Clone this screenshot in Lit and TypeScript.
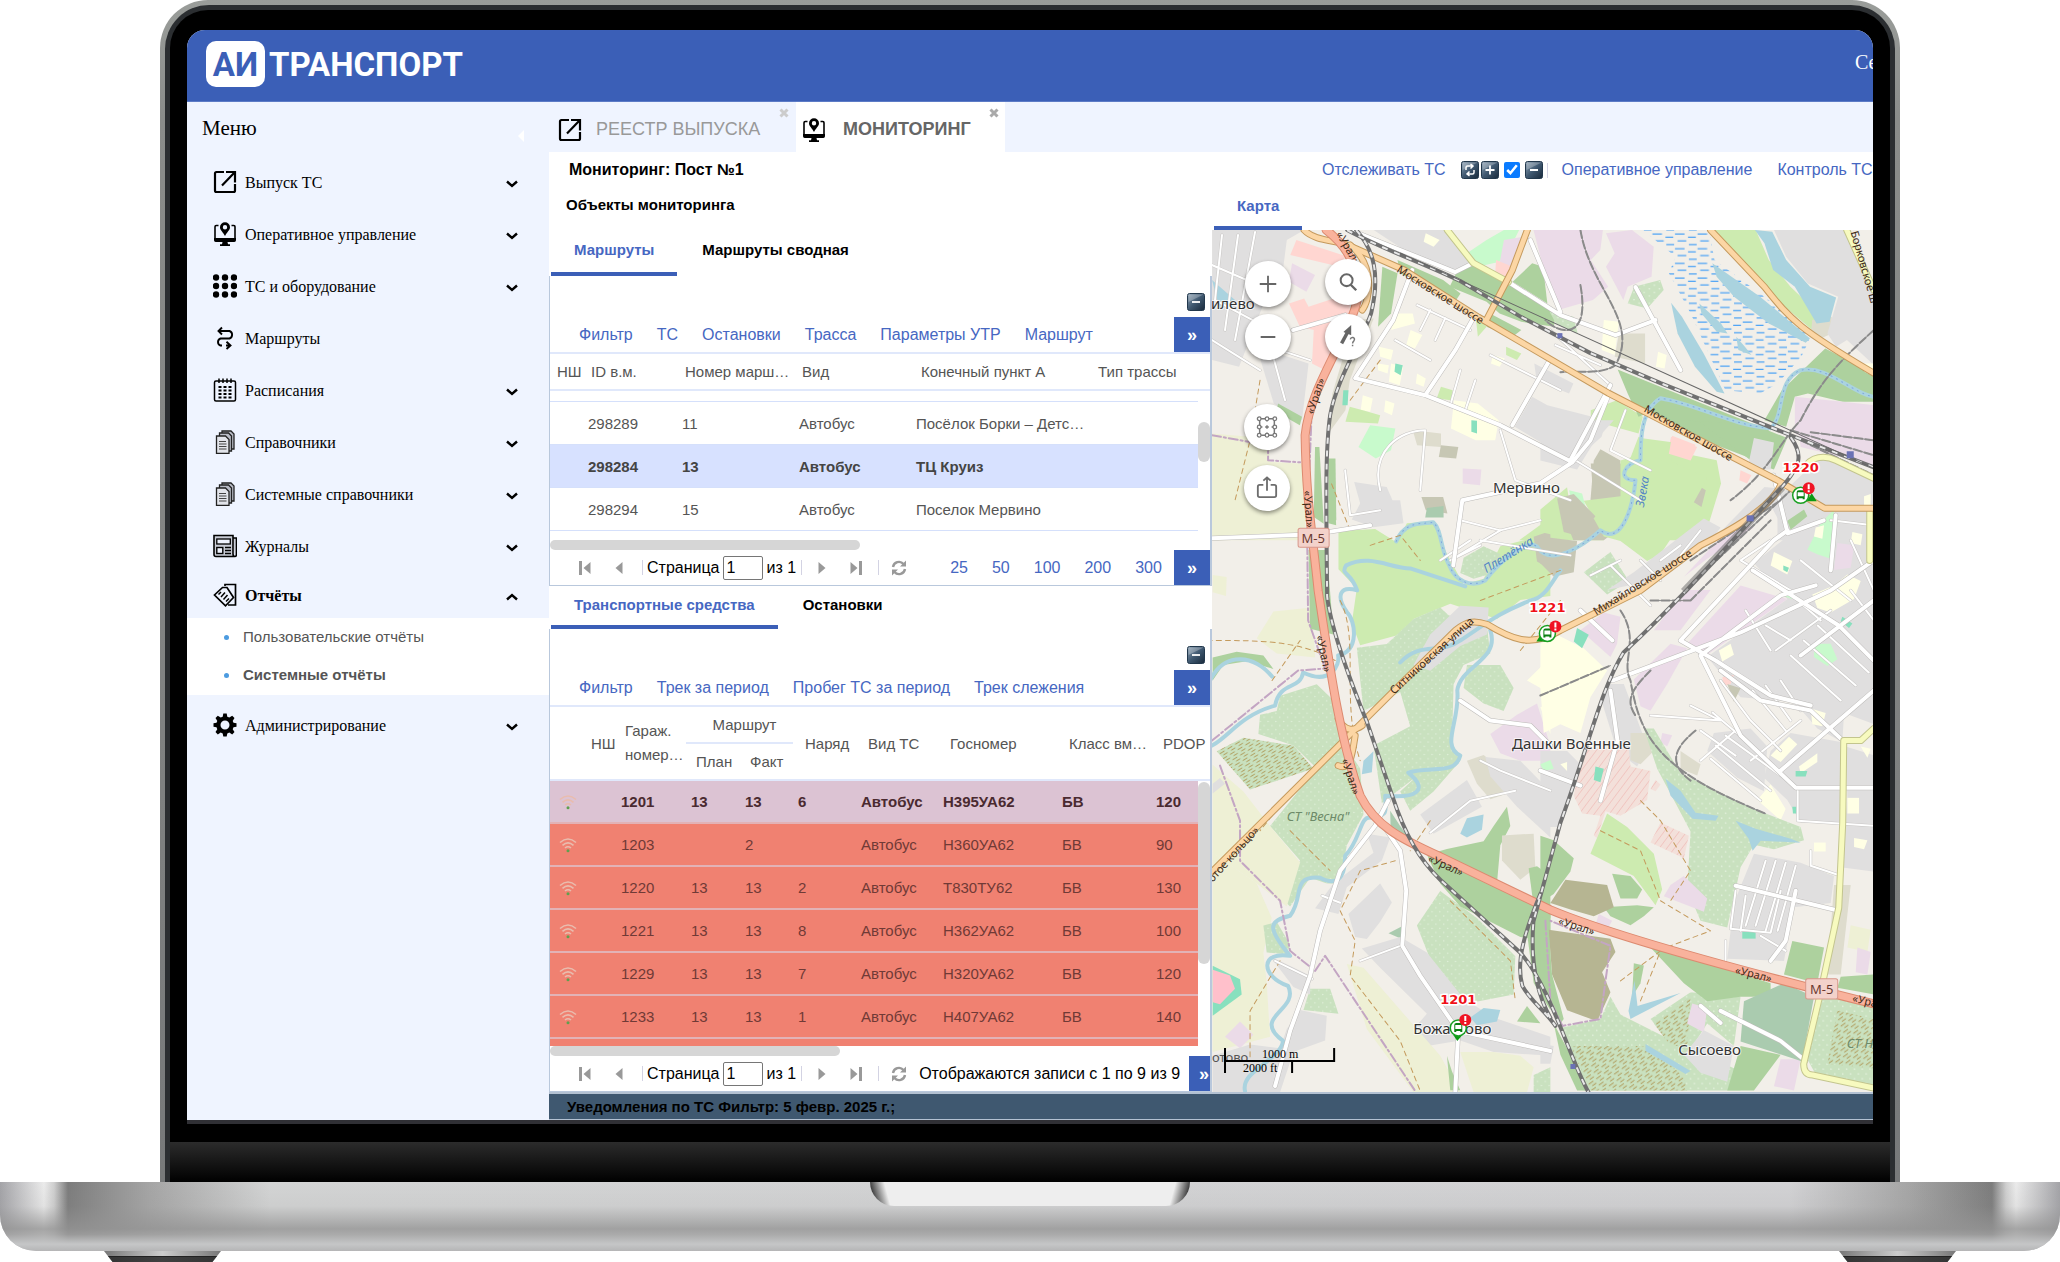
import { LitElement, html, svg, css, nothing } from "lit";
import { customElement } from "lit/decorators.js";

/* ---------- icons ---------- */
const openIcon = svg`<path d="M11 2H3.500Q2 2 2 3.500V20.500Q2 22 3.500 22H20.500Q22 22 22 20.500V14M22 12.500V2H13M21.500 2.500L9 15.500" fill="none" stroke="currentColor" stroke-width="2.200"/>`;
const monitorIcon = svg`<path d="M5.500 3.500H3.200Q2 3.500 2 4.700V16M22 16V4.700Q22 3.500 20.800 3.500H18.500" fill="none" stroke="currentColor" stroke-width="1.600"/><path d="M1 16H23V18.300Q23 20 21.300 20H2.700Q1 20 1 18.300ZM9.500 20H14.500L15 22.300H17V24H7V22.300H9Z" fill="currentColor"/><path fill-rule="evenodd" d="M12 0.200A5 5 0 0 1 17 5.200C17 8.300 13.300 10.800 12 14C10.700 10.800 7 8.300 7 5.200A5 5 0 0 1 12 0.200ZM12 3A2.200 2.200 0 1 0 12 7.400A2.200 2.200 0 1 0 12 3Z" fill="currentColor"/>`;
const dotsIcon = svg`${[3.500, 12, 20.500].map((y) => [3, 12, 21].map((x) => svg`<circle cx=${x} cy=${y} r="3.200" fill="currentColor"/>`))}`;
const routeIcon = svg`<path d="M9 1.500L5.500 5L9 8.500M6 5H16.500A4 4 0 0 1 16.500 12.500H7.500A3.700 3.700 0 0 0 7.500 19.500H9M13 19.500H17M13.500 15.800L17.500 19.500L13.500 23" fill="none" stroke="currentColor" stroke-width="1.900"/>`;
const calendarIcon = svg`<rect x="1.500" y="3" width="21" height="20" rx="1.500" fill="none" stroke="currentColor" stroke-width="1.500"/><path d="M6 0.500V5M10 0.500V5M14 0.500V5M18 0.500V5" stroke="currentColor" stroke-width="1.500"/>${[9, 12.500, 16, 19.500].map((y) => svg`<path d="M5.500 ${y}H8.500M10.500 ${y}H13.500M15.500 ${y}H18.500" stroke="currentColor" stroke-width="1.900"/>`)}`;
const docsIcon = svg`<g stroke="#222" stroke-width="1.300" fill="#b9bcc6"><path d="M9 1H18L21 4V19H9Z"/><path d="M6.500 3H15.500L18.500 6V21H6.500Z"/><path d="M3.500 6H12.500L16 9.500V23.300H3.500Z" fill="#e2e4ea"/></g><path d="M6 11.500H13M6 14H13.500M6 16.500H13.500M6 19H13.500" stroke="#444" stroke-width="1.200"/>`;
const newsIcon = svg`<path d="M1 1.500H20V20Q20 22.500 22 22.500H3Q1 22.500 1 20.500ZM20 4H23.500V20.500Q23.500 22.500 21.800 22.500" fill="#c9ccd6" stroke="currentColor" stroke-width="1.600"/><rect x="3.800" y="5" width="13.500" height="5" fill="#eef2fd" stroke="currentColor" stroke-width="1.300"/><rect x="3.800" y="13.500" width="6" height="6" fill="#eef2fd" stroke="currentColor" stroke-width="1.400"/><path d="M12 13.500H18M12 16.500H18M12 19.500H18" stroke="currentColor" stroke-width="1.400"/>`;
const reportIcon = svg`<path d="M12 3V1.500H22.500V22H15" fill="none" stroke="currentColor" stroke-width="1.700"/><path d="M9.500 4.500H14L20.500 14.500L12.500 22.800L1.500 12Z" fill="#eff4ff" stroke="currentColor" stroke-width="1.700"/><path d="M5.500 11.500L8 9M8 14L12 9.500M10.500 16.500L14.500 12M13 18.500L16 15.500" stroke="currentColor" stroke-width="1.500"/>`;
const gearIcon = svg`<path fill="currentColor" fill-rule="evenodd" d="M10.300 0.500H13.700L14.300 3.700L16.300 4.500L19.200 2.700L21.500 5.100L19.700 7.900L20.500 9.800L23.500 10.300V13.700L20.500 14.300L19.700 16.200L21.500 19L19.200 21.400L16.300 19.600L14.300 20.400L13.700 23.500H10.300L9.700 20.400L7.700 19.600L4.800 21.400L2.500 19L4.300 16.200L3.500 14.300L0.500 13.700V10.300L3.500 9.800L4.300 7.900L2.500 5.100L4.800 2.700L7.700 4.500L9.700 3.700ZM12 7.500A4.500 4.500 0 1 0 12 16.500A4.500 4.500 0 1 0 12 7.500Z"/>`;
const icon = (body: unknown, cls = "ico") => html`<svg class=${cls} viewBox="0 0 24 24" aria-hidden="true">${body}</svg>`;
const chevron = (up: boolean) => html`<svg class="chev" viewBox="0 0 12 8" aria-hidden="true"><path d=${up ? "M1 6.500L6 2L11 6.500" : "M1 1.500L6 6L11 1.500"} fill="none" stroke="#000" stroke-width="2.400"/></svg>`;
const wifi = html`<svg class="wifi" viewBox="0 0 18 16" aria-hidden="true"><path d="M1 5.500Q9 -1.500 17 5.500M3.500 8.300Q9 3.300 14.500 8.300M6 11Q9 8.500 12 11" fill="none" stroke="#e9bcae" stroke-width="1.600"/><circle cx="9" cy="13.800" r="1.500" fill="#5fa04e"/></svg>`;

const tile = (sign: unknown) => html`<svg viewBox="0 0 18 18" aria-hidden="true">
  <defs><linearGradient id="t" x1="0" y1="0" x2="1" y2="1"><stop offset="0" stop-color="#8fa3b5"/><stop offset="0.500" stop-color="#3f5870"/><stop offset="1" stop-color="#18293a"/></linearGradient></defs>
  <rect x="0.500" y="0.500" width="17" height="17" rx="2" fill="url(#t)" stroke="#22384c"/>
  <path d="M1.500 1.500H16.500L1.500 9Z" fill="#fff" opacity="0.250"/>${sign}</svg>`;
const minus = svg`<path d="M5 9H13" stroke="#fff" stroke-width="1.800"/>`;
const plus = svg`<path d="M4.500 9H13.500M9 4.500V13.500" stroke="#fff" stroke-width="1.800"/>`;
const swap = svg`<path d="M5 9V6.500Q5 5 6.500 5H11M9.500 3L12 5L9.500 7.500M13 9V11.500Q13 13 11.500 13H7M8.500 10.500L6 13L8.500 15" fill="none" stroke="#fff" stroke-width="1.500"/>`;

/* ---------- data ---------- */
const menu = [
  ["Выпуск ТС", openIcon, true],
  ["Оперативное управление", monitorIcon, true],
  ["ТС и оборудование", dotsIcon, true],
  ["Маршруты", routeIcon, false],
  ["Расписания", calendarIcon, true],
  ["Справочники", docsIcon, true],
  ["Системные справочники", docsIcon, true],
  ["Журналы", newsIcon, true],
] as const;

const routes = [
  ["298289", "11", "Автобус", "Посёлок Борки – Детс…", ""],
  ["298284", "13", "Автобус", "ТЦ Круиз", ""],
  ["298294", "15", "Автобус", "Поселок Мервино", ""],
];

const vehicles = [
  ["1201", "13", "13", "6", "Автобус", "Н395УА62", "БВ", "120"],
  ["1203", "", "2", "", "Автобус", "Н360УА62", "БВ", "90"],
  ["1220", "13", "13", "2", "Автобус", "Т830ТУ62", "БВ", "130"],
  ["1221", "13", "13", "8", "Автобус", "Н362УА62", "БВ", "100"],
  ["1229", "13", "13", "7", "Автобус", "Н320УА62", "БВ", "120"],
  ["1233", "13", "13", "1", "Автобус", "Н407УА62", "БВ", "140"],
];

/* ---------- map ---------- */
type Area = [string, string];
const C = {
  res: "#e0dfdf", farm: "#eef0d5", shop: "#ffd6d1", ind: "#ebdbe8", wood: "#add19e", grass: "#cdebb0",
  park: "#c8facc", orch: "url(#orchard)", lots: "url(#lots)", water: "#aad3df", school: "#ffffe5",
  brown: "#c7c7b4", olive: "#b6b592", cem: "#aacbaf", mil: "url(#mil)", pitch: "#88e0be", scrub: "#dedccd",
};

const north: Area[] = [
  [C.farm, "28,1000 160,1015 160,1085 235,1090 245,1320 28,1320"],
  [C.res, "28,390 240,390 200,420 190,520 150,600 120,700 90,800 28,780"],
  [C.res, "130,740 250,790 235,960 170,910"],
  [C.shop, "222,420 335,468 322,500 208,465"], [C.shop, "205,610 240,595 250,620 320,590 345,605 345,650 285,808 258,790 262,690 230,680"],
  [C.ind, "212,490 265,525 245,575 205,545"], [C.scrub, "355,660 400,655 345,840 335,930 290,1010 305,880"],
  [C.wood, "420,500 455,520 440,640 410,680"], [C.wood, "180,910 235,950 230,975 175,935"], [C.wood, "265,1040 275,1040 285,1270 262,1250"], [C.wood, "296,1075 312,1075 314,1260 296,1260"],
  [C.res, "400,390 570,390 625,490 590,518 470,450"], [C.school, "520,400 552,420 538,440 515,425"],
  [C.park, "612,462 660,420 700,390 735,390 712,450 690,485 640,500"],
  [C.ind, "700,420 745,410 735,450 720,510 690,490"], [C.shop, "682,480 720,500 705,540 680,520"],
  [C.wood, "625,490 705,545 820,630 815,680 740,665 690,640 660,605 575,560 590,520"], [C.wood, "765,490 790,500 800,610 720,545"], [C.wood, "455,480 560,540 600,580 590,600 460,520"], [C.wood, "668,640 740,690 720,710 660,680"],
  [C.ind, "768,390 928,390 922,450 900,480 940,560 905,600 825,630 790,500"], [C.ind, "935,400 995,390 1045,440 1040,530 985,560 975,600 935,500 955,460"],
  [C.orch, "1000,560 1060,540 1068,570 1030,625 985,610"], [C.orch, "805,635 860,650 870,700 820,670"],
  [C.school, "450,640 490,640 495,670 440,690"], [C.school, "485,690 512,705 495,745 475,735"], [C.school, "412,740 445,750 440,780 415,770"], [C.school, "440,790 468,800 460,855 435,845"], [C.school, "410,790 435,795 432,820 410,810"], [C.school, "500,820 520,835 515,860 497,850"], [C.school, "375,885 398,895 392,935 370,930"], [C.school, "427,900 448,910 442,945 424,935"], [C.school, "585,900 640,910 688,960 680,1020 635,1020 578,985"], [C.school, "675,765 702,775 690,800 670,790"],
  [C.pitch, "450,790 467,795 462,825 448,815"], [C.pitch, "330,870 342,870 340,915 328,915"], [C.pitch, "625,960 638,962 638,1000 625,995"],
  [C.grass, "345,920 375,930 415,945 410,970 335,965"], [C.grass, "555,860 582,870 578,900 545,895"], [C.grass, "635,650 660,680 640,710"], [C.grass, "705,740 740,760 730,780 705,765"],
  [C.park, "392,975 450,985 440,1050 405,1075 365,1040"],
  [C.scrub, "490,990 555,1000 555,1040 500,1035"], [C.brown, "555,1035 595,1040 590,1075 550,1070"], [C.ind, "605,1105 648,1108 645,1155 605,1150"], [C.brown, "510,1190 560,1190 570,1240 520,1230"],
  [C.res, "770,790 860,850 850,880 775,840"], [C.res, "765,890 800,915 935,960 925,1010 860,1085 725,980"], [C.res, "355,1145 430,1160 460,1250 380,1260"],
  [C.scrub, "965,700 1025,700 1025,790 955,770"], [C.school, "930,660 965,665 955,765 925,750"], [C.school, "1055,755 1075,765 1070,805 1050,800"],
  [C.grass, "900,930 960,900 1020,950 1010,1000 900,960"], [C.grass, "1010,1010 1080,1050 1190,1080 1200,1150 1160,1320 1000,1320 960,1180"],
  [C.shop, "1085,1010 1145,1040 1130,1080 1078,1050"], [C.brown, "900,1090 985,1090 970,1190 930,1220 905,1170"], [C.grass, "820,1240 880,1240 930,1320 735,1320"], [C.brown, "820,1190 900,1250 960,1290 930,1320 860,1320"],
  [C.park, "850,1170 880,1180 890,1230 860,1235"], [C.brown, "1140,1150 1165,1170 1155,1220 1130,1200"],
  [C.wood, "962,808 1060,860 1310,990 1290,1085 1190,1035 1040,935 1010,950 985,880"], [C.wood, "1300,960 1340,870 1440,745 1552,820 1552,905 1480,905 1400,880 1370,890 1350,980"],
  [C.grass, "1172,390 1280,390 1310,480 1360,560 1440,660 1410,690 1320,590"], [C.scrub, "1410,660 1455,650 1455,700 1430,715 1408,690"],
  ["url(#marsh)", "1020,390 1172,390 1185,480 1290,580 1410,700 1385,770 1330,850 1290,880 1210,870 1130,640 1080,520 1095,470"],
  [C.water, "1180,490 1290,590 1405,715 1395,728 1310,670 1230,590 1190,530"], [C.water, "1085,608 1110,650 1160,760 1208,880 1190,875 1140,800 1100,700"], [C.water, "1150,610 1200,670 1215,700 1190,695 1155,640"], [C.water, "1235,710 1255,740 1270,765 1240,750"],
  [C.water, "1278,390 1318,395 1350,480 1405,560 1465,592 1450,665 1420,670 1370,560 1320,510 1300,430"],
  [C.res, "1322,390 1490,390 1552,570 1552,795 1490,720 1465,740 1445,700 1470,590 1400,550 1350,470"],
  [C.ind, "1370,890 1480,905 1552,915 1552,1100 1370,1000"], [C.school, "1530,790 1552,790 1552,830 1530,815"],
  [C.res, "1300,1160 1335,1165 1280,1240 1240,1320 1180,1320"], [C.shop, "1245,1110 1270,1125 1260,1150 1242,1140"],
  [C.res, "1400,1110 1430,1075 1552,1130 1552,1320 1330,1320 1330,1200"], [C.school, "1370,1200 1420,1215 1400,1240 1370,1230"], [C.park, "1430,1250 1470,1260 1450,1320 1415,1310"], [C.ind, "1475,1265 1530,1280 1520,1320 1470,1320"], [C.shop, "1425,1150 1455,1160 1450,1200 1425,1190"],
];

const southwest: Area[] = [
  [C.farm, "38,0 320,0 322,40 300,95 38,105"], [C.farm, "220,290 335,280 345,410 230,400 170,360"], [C.farm, "38,195 80,200 78,250 38,240"],
  [C.res, "485,0 600,0 610,60 520,70 455,50"], [C.wood, "325,130 380,130 400,350 330,335"], [C.wood, "385,0 405,0 408,65 385,60"], [C.cem, "680,20 730,15 730,45 675,45"],
  [C.grass, "415,80 525,75 590,110 620,60 700,55 740,140 790,220 850,205 900,120 990,100 1050,40 1050,250 960,260 890,310 750,270 640,310 600,350 480,378 455,320 470,230 415,180"],
  [C.orch, "790,150 850,120 900,140 880,190 820,205 780,190"], [C.brown, "1000,95 1050,80 1050,180 1010,160"],
  [C.orch, "470,385 560,375 640,310 720,280 745,300 860,330 870,400 790,430 760,480 755,640 780,680 700,760 630,810 600,760 650,720 545,790 520,640 630,590 600,500 490,550"],
  [C.res, "690,350 780,275 865,280 860,350 780,380 690,445 640,430"], [C.orch, "800,430 900,430 940,490 910,550 850,530 790,490"],
  [C.orch, "240,510 350,480 410,530 420,620 480,700 490,820 440,900 420,1000 380,1000 330,985 270,1060 235,1030 300,940 210,850 350,700 280,640 175,610 180,560 230,550"],
  [C.lots, "50,655 130,620 280,640 340,700 150,755"], [C.wood, "38,410 110,395 190,405 220,440 140,420 70,430 38,470"],
  [C.farm, "38,690 130,760 210,850 300,945 260,1060 170,1000 38,920"], [C.farm, "38,920 170,1000 215,1090 190,1180 200,1260 210,1400 38,1440"],
  [C.res, "500,870 570,880 545,940 440,1010 415,1080 345,1065 400,1000 520,920"], [C.res, "540,1000 575,1050 540,1100 500,1145 465,1140 445,1080"], [C.cem, "565,1130 610,1110 605,1145"],
  [C.orch, "650,1110 720,1020 830,1090 945,1190 940,1290 820,1310 740,1270 700,1220"], [C.orch, "190,1110 230,1100 270,1160 260,1185 200,1180"],
  [C.wood, "680,925 740,910 850,890 880,850 920,800 930,850 900,900 890,1000 1050,1080 1050,1150 960,1140 780,1060 720,1000"], [C.scrub, "905,875 1000,870 1005,960 960,990 905,940"],
  [C.wood, "985,960 1010,955 1050,980 1050,1090 1000,1060"], [C.wood, "980,1130 1050,1080 1050,1330 1000,1260"],
  [C.res, "660,820 800,730 845,800 700,870"], [C.ind, "870,610 950,560 1010,530 1050,640 1050,680 960,680 900,660"], [C.scrub, "800,680 850,665 900,700 940,760 870,780 830,740"], [C.res, "855,670 960,680 1050,760 1050,880 950,800 870,720"],
  [C.school, "980,470 1050,410 1050,510 1020,490"], [C.school, "1020,540 1050,530 1050,610"],
  [C.water, "490,680 520,655 515,710 485,715"], [C.water, "800,830 850,820 845,860 800,880 780,870"], [C.cem, "570,810 600,850 625,880 572,880"],
  [C.res, "485,1170 600,1140 680,1180 790,1300 880,1350 1050,1400 1050,1450 880,1440 780,1410 640,1430 640,1380 680,1340 540,1220"], [C.farm, "440,1210 490,1220 560,1290 720,1450 780,1545 640,1545 500,1380"], [C.farm, "780,1440 880,1440 960,1450 1000,1480 980,1545 820,1545"],
  [C.pitch, "38,1215 120,1250 125,1290 38,1345"], ["#ffc0cb", "38,1225 90,1240 105,1275 60,1315 38,1310"], [C.ind, "75,1400 120,1360 160,1395 120,1430"],
  [C.res, "38,1450 150,1420 240,1430 260,1380 300,1330 380,1345 375,1410 280,1440 240,1545 38,1545"], [C.orch, "330,1275 390,1275 415,1340 310,1330"], [C.res, "210,1190 330,1240 330,1290 280,1270"],
  [C.water, "810,1350 850,1325 900,1330 890,1360 830,1370"], [C.wood, "950,1360 980,1320 1020,1365"], [C.wood, "740,1450 755,1490 780,1540 750,1540"], [C.orch, "1000,1500 1050,1480 1050,1545 1000,1545"], [C.res, "38,740 60,725 75,740 38,765"],
];

const southeast: Area[] = [
  [C.res, "0,0 220,0 160,50 110,110 0,90"], [C.brown, "180,65 240,90 235,150 200,190 150,180 160,90"], [C.grass, "240,90 330,70 500,130 440,210 360,300 320,315 240,270 190,260 130,180 240,170"],
  [C.grass, "0,200 80,150 100,250 60,260 0,250"], [C.brown, "50,175 100,165 165,215 120,260 70,250"], [C.brown, "0,260 110,270 100,340 40,350 0,320"], [C.orch, "130,340 210,295 265,360 200,390"],
  [C.grass, "300,40 400,50 390,100 340,80"], [C.shop, "395,35 465,55 450,90 385,75"], [C.res, "280,340 490,220 540,240 500,280 330,360 200,380"],
  [C.wood, "200,0 420,0 640,10 740,40 700,110 640,95 470,0"], [C.res, "640,40 700,50 690,110 620,110"], [C.ind, "770,0 1000,0 1000,100 780,60"],
  [C.res, "800,110 850,90 1000,150 1000,680 910,655 905,720 830,690 760,630 600,620 500,530 740,400 640,320 740,260 690,190 730,160"],
  [C.park, "800,290 840,230 880,200 870,310 830,300"], [C.school, "825,240 850,235 845,265 820,260"], [C.school, "700,295 755,315 740,345 690,325"], [C.school, "815,390 880,370 920,345 960,360 940,400 870,430 830,420"], [C.school, "970,170 990,165 990,190 970,190"], [C.school, "935,250 965,255 960,280 930,275"],
  [C.park, "820,500 870,500 890,535 860,550 820,530"], [C.pitch, "905,440 935,455 925,465 900,450"], [C.park, "740,380 760,380 755,400 735,395"], [C.ind, "890,275 940,280 930,330 880,335"], [C.wood, "740,225 790,200 800,215 750,245"], [C.pitch, "728,325 745,330 740,340 728,335"],
  [C.ind, "440,500 600,370 740,400 500,525"], [C.ind, "340,470 430,380 510,380 420,470"], [C.ind, "120,470 190,430 240,440 230,500 210,530"], [C.ind, "280,580 390,500 440,510 380,590 330,650 300,640"], [C.ind, "530,270 600,230 640,240 500,310 430,350"],
  [C.school, "0,500 50,480 130,510 200,560 150,620 120,700 60,680 10,700 0,600"], [C.pitch, "110,465 145,480 125,510 100,495"], [C.school, "535,515 570,500 580,525 545,540"], [C.shop, "545,575 580,570 570,590 550,595"], [C.brown, "560,590 600,600 580,630"],
  [C.res, "210,590 250,590 300,690 320,730 290,775 230,740 180,620"], [C.res, "0,740 80,740 120,770 60,910 0,910"], [C.park, "0,770 30,760 40,780 10,785"], [C.school, "60,770 80,765 80,785"],
  [C.res, "520,700 630,690 680,730 670,830 590,800 500,740"], [C.res, "690,740 750,700 900,720 900,900 780,900 740,850 670,800"], [C.res, "915,730 1000,750 1000,1010 900,1000 920,850"], [C.school, "690,750 745,708 770,725 720,765"], [C.school, "810,645 855,655 845,685 815,680"], [C.school, "775,775 830,745 830,765 780,790"], [C.pitch, "765,785 800,785 795,797 765,797"], [C.school, "650,850 690,815 735,870 720,895"], [C.pitch, "755,865 770,865 770,880 757,880"], [C.school, "920,845 955,845 955,880 920,880"], [C.school, "820,945 855,945 855,965 820,965"], [C.school, "940,935 980,940 970,960 940,955"], [C.school, "800,1005 870,1015 850,1040 830,1065 800,1055"], [C.school, "960,730 990,735 980,755"], [C.ind, "365,700 395,705 380,730 360,720"],
  [C.mil, "130,735 265,735 270,775 330,785 320,850 240,885 195,875 170,935 160,930 180,885 125,880 100,840"], [C.pitch, "165,775 190,780 180,810 160,805"], [C.mil, "360,900 445,930 430,980 330,945"], [C.mil, "345,805 360,815 345,830 330,825"], [C.scrub, "270,700 330,700 340,740 300,770 270,760"], [C.scrub, "420,740 480,770 470,795 420,780"],
  [C.grass, "200,880 260,910 340,970 365,1050 345,1085 280,1020 150,970"],
  [C.orch, "310,690 340,690 420,790 640,870 780,910 790,940 700,960 640,950 600,1000 560,1135 480,1120 440,1050 450,920 400,850 350,780"],
  [C.ind, "430,1020 500,1070 490,1100 370,1065 390,1040"], [C.wood, "0,930 40,940 100,980 90,1010 40,1060 0,1080"], [C.wood, "215,1015 270,1020 305,1050 290,1070 240,1070"], [C.wood, "190,1090 290,1085 340,1090 310,1110 270,1130 210,1110"],
  [C.olive, "75,1028 200,1040 220,1090 160,1110 90,1095 30,1080"], [C.ind, "175,1105 215,1120 200,1140 165,1130"], [C.olive, "25,1140 210,1160 225,1190 185,1235 210,1280 170,1345 80,1320 35,1240"],
  [C.wood, "0,1110 22,1120 35,1240 70,1340 60,1350 0,1260"], [C.orch, "60,1360 180,1340 210,1290 240,1330 400,1390 580,1450 600,1500 130,1500"], [C.lots, "90,1400 330,1400 430,1470 440,1500 150,1500"],
  [C.orch, "330,1340 450,1280 600,1290 580,1400 500,1350 430,1430"], [C.lots, "340,1350 450,1290 440,1400 390,1400"], [C.wood, "280,1215 310,1220 300,1260 275,1290"], [C.wood, "330,1180 500,1215 690,1260 690,1290 600,1290 500,1300 430,1260"],
  [C.ind, "455,1305 500,1315 490,1370 440,1350"], [C.res, "430,1420 490,1365 580,1400 560,1480 480,1460"], [C.wood, "600,1400 720,1420 640,1500 560,1500"], [C.ind, "720,1430 780,1430 760,1500 700,1490"],
  [C.cem, "610,1300 730,1260 820,1290 785,1435 600,1390"], [C.wood, "755,1165 850,1180 830,1260 730,1240"], [C.orch, "850,1280 1000,1310 1000,1490 830,1470 800,1430"], [C.lots, "890,1320 1000,1340 1000,1450 860,1440"], [C.wood, "900,1245 1000,1240 1000,1285 890,1270"],
  [C.res, "640,970 780,990 880,1020 870,1080 760,1090 730,1210 560,1205 580,1080"], [C.pitch, "605,1145 645,1145 645,1160 605,1160"], [C.scrub, "880,1040 930,1040 900,1240 860,1240"], [C.farm, "930,1130 990,1140 980,1190 920,1180"], [C.ind, "950,1180 990,1190 980,1240 945,1235"],
  [C.res, "0,1395 40,1400 30,1440 0,1440"], [C.wood, "40,1350 90,1420 145,1500 110,1500 60,1420"],
];

const water = [
  "M1400 662C1420 640 1440 655 1460 640C1490 620 1500 612 1530 600C1545 598 1552 580 1560 570",
  "M1396 541C1405 520 1422 524 1433 522C1442 530 1440 550 1449 565C1455 580 1470 588 1485 580C1500 560 1530 535 1538 548C1550 565 1580 548 1600 530C1620 545 1632 510 1635 480C1615 480 1625 462 1640 460C1640 440 1640 410 1660 398C1700 405 1730 425 1770 428C1785 415 1775 380 1800 370C1830 365 1850 395 1880 398",
  "M1212 745C1230 735 1240 715 1275 705C1280 680 1300 690 1303 672C1330 685 1340 665 1338 655C1360 650 1355 620 1347 612C1335 595 1340 585 1357 590C1350 570 1340 575 1346 565C1370 553 1390 568 1410 568L1465 586",
  "M1210 680C1225 650 1255 655 1272 676", "M1490 630C1500 660 1460 665 1457 690C1460 720 1440 745 1460 755C1455 775 1430 765 1408 772C1430 790 1415 798 1385 795C1385 810 1390 815 1370 817C1360 815 1360 840 1345 855C1345 880 1335 885 1320 877C1290 875 1305 895 1290 915C1270 920 1265 925 1290 955C1260 950 1260 975 1288 985C1300 1010 1250 1015 1283 1040C1280 1060 1240 1070 1245 1090",
];
const rail = [
  "M1347 230C1380 248 1420 262 1460 281L1521 317L1590 353L1660 383L1720 407L1790 435L1873 467",
  "M1356 230C1374 250 1380 275 1371 313C1362 340 1336 380 1330 415C1325 450 1326 500 1327 596C1331 630 1350 680 1367 722L1392 795C1405 835 1420 860 1440 879L1520 952C1550 985 1570 1060 1588 1091",
  "M1790 437C1803 455 1800 465 1781 487C1740 530 1690 590 1623 652C1600 690 1590 740 1560 822L1533 921C1530 960 1535 990 1550 1017",
  "M1540 893C1525 930 1515 960 1522 985C1530 1000 1545 1010 1555 1025",
];
const sidings = [
  "M1580 285C1590 340 1560 335 1545 320M1580 230C1590 290 1640 320 1615 365C1600 375 1580 370 1560 372M1873 330C1840 360 1820 380 1800 420C1780 440 1770 470 1730 500", "M1700 575L1790 490M1690 560L1780 500M1690 600L1770 520M1650 600L1690 600M1790 430L1873 455M1800 440L1873 475M1810 432L1873 440M1620 610C1640 640 1620 660 1630 680C1640 740 1660 770 1765 813M1650 670C1630 690 1625 700 1635 715M1695 730C1670 750 1670 765 1690 780M1540 695L1610 665",
];
const trunk = "M1326 230C1352 250 1360 275 1357 300C1350 335 1310 385 1305 435C1306 500 1312 530 1318 590C1330 670 1340 740 1360 795C1375 825 1400 838 1440 856L1550 909C1600 930 1700 960 1873 1003";
const orange = [
  "M1304 230C1315 242 1340 240 1352 247L1404 270L1478 317L1608 393L1647 413L1777 480L1824 508H1873",
  "M1781 483C1770 510 1720 535 1700 545L1640 590L1560 630C1530 648 1510 638 1487 624C1475 620 1467 620 1455 630L1397 687L1212 871", "M1527 230L1512 270L1486 320", "M1710 230L1764 287C1790 320 1800 330 1873 373", "M1350 245C1375 265 1370 300 1362 310", "M1338 718C1345 732 1355 730 1362 725M1338 765C1350 770 1352 755 1355 735",
];
const yellow = ["M1447 230L1473 263L1508 282", "M1846 230L1873 290", "M1803 469C1810 455 1825 455 1835 460L1873 478", "M1873 728L1860 740H1843L1842 822L1838 907L1820 991L1803 1063Q1803 1074 1812 1074L1873 1087", "M1869 510V560"];
const white = [
  "M1412 270L1393 320L1355 378L1425 395L1500 425L1572 462L1590 440L1608 395M1425 395L1455 350L1472 320M1512 425L1548 362M1508 282L1560 315L1615 335L1655 320M1530 240L1560 312M1635 287L1680 370M1473 263L1455 272L1350 230M1572 462L1540 483L1462 500L1455 550L1453 565",
  "M1610 385L1570 460M1293 330L1345 315M1212 538L1313 534L1370 525M1580 610L1612 640M1612 680L1740 632L1830 590L1873 560M1680 640L1773 540L1787 530M1773 475L1787 533L1823 520M1835 515L1830 570M1700 655L1740 735L1795 787H1873M1680 640L1715 660L1770 695L1810 705M1815 585L1780 595L1700 655M1720 670L1760 700L1810 710L1840 738M1780 770L1873 690M1752 570L1838 625L1873 660M1800 655L1873 600M1460 700L1490 720L1530 725L1550 745M1540 770L1580 785M1735 885L1838 910M1770 960L1785 940L1795 890M1212 1090M1390 800",
  "M1388 800L1375 825L1340 870L1320 930L1310 975L1290 1030L1275 1085M1380 820L1400 850L1406 890L1402 945L1420 975L1458 1030L1550 1050M1458 1030L1455 1091M1720 1010L1780 1040L1805 1060M1700 1005L1720 1022M1610 690L1617 740L1600 800",
];
const fine = [
  "M1222 235L1215 300M1238 235L1225 330M1255 232L1235 340M1212 265L1270 290M1215 300L1262 325M1212 340L1260 370M1270 345L1285 400M1280 350L1310 360M1417 305L1470 330M1430 310L1420 330M1445 318L1435 340M1395 340L1430 360M1460 370L1450 405M1475 380L1465 410M1490 355L1560 390M1550 330L1610 385M1555 345L1600 365M1345 470L1350 515L1380 510M1380 490C1370 450 1400 430 1425 430L1420 490M1460 520L1500 530L1540 520M1500 430L1515 480L1570 500M1575 460L1640 500M1625 410L1610 450L1650 470M1480 540L1570 555",
  "M1735 755L1700 730M1745 740L1712 712M1750 760L1800 720M1752 690L1785 730M1765 685L1790 720M1780 680L1800 710M1790 655L1840 700M1803 640L1855 685M1817 625L1868 672M1775 650L1830 610M1745 610L1770 650M1765 625L1790 640M1780 585L1820 620M1850 540L1873 590M1850 590L1873 620M1800 560L1850 600M1770 540L1740 560L1790 590M1830 520L1873 525M1720 680L1750 720L1780 750M1715 745L1770 790M1725 735L1780 775M1710 758L1760 800M1797 790V820L1873 825M1810 850V865L1840 875M1735 730L1700 760M1690 705L1720 720L1650 715",
  "M1765 860L1745 925M1775 860L1755 925M1785 862L1765 930M1795 865L1777 930M1735 890L1730 928M1745 895L1740 930M1730 928L1770 932L1780 890M1760 935L1785 950M1725 940L1725 960M1480 545L1450 560L1500 530M1440 560L1470 540M1275 960L1312 978M1322 895L1340 902M1360 960L1400 945M1430 832L1470 800L1515 790M1480 760L1500 770L1550 790M1620 560L1590 575M1680 545L1660 560M1700 530L1680 555M1640 560L1660 580M1610 565L1650 605",
];
const tracks = [
  "M1335 660C1300 640 1260 640 1212 640M1272 680L1300 640M1370 545L1400 535L1420 560M1340 600C1360 640 1340 700 1360 760M1430 820L1410 850M1300 780L1260 830M1290 830L1330 870M1395 860L1360 870L1340 910L1355 940L1350 975L1400 1040L1420 1090M1280 960L1250 1010L1250 1060M1450 900L1510 960L1515 1000M1640 800L1660 820L1690 870L1670 900M1600 830L1640 850L1660 900M1660 900L1710 930L1670 945M1350 400L1380 360M1260 380L1250 440L1235 500M1350 530L1330 480M1520 650L1560 600M1480 600L1560 570M1620 980L1660 950L1640 1000",
];
const borders = "M1212 740L1298 670L1325 668L1308 620L1307 530L1312 400M1220 765L1240 820L1240 860L1280 900L1290 950L1315 970L1325 955L1415 1090M1212 435L1268 445L1268 460L1300 462M1545 920L1550 1000L1562 1025L1600 1018L1605 980L1610 945L1550 920";

const group = (areas: Area[], transform: string) => svg`<g transform=${transform}>${areas.map(([fill, pts]) => svg`<polygon points=${pts} fill=${fill}/>`)}</g>`;
const lines = (ds: string[], color: string, width: number, dash = "") => ds.map((d) => svg`<path d=${d} stroke=${color} stroke-width=${width} stroke-dasharray=${dash || "none"}/>`);
const label = (t: string, x: number, y: number, a: number, cls: string) => svg`<text class=${cls} text-anchor="middle" transform="translate(${x} ${y}) rotate(${a})">${t}</text>`;
const marker = (id: string, x: number, y: number, lx: number, ly: number, ax: number, ay: number, arrow: string) => svg`
  <g><path d=${arrow} fill="#0a9a14"/><circle cx=${x} cy=${y} r="8" fill="#fff" stroke="#19a022" stroke-width="1.500"/>
  <path fill-rule="evenodd" d="M${x - 4} ${y + 4}V${y - 3}Q${x - 4} ${y - 5} ${x - 2} ${y - 5}H${x + 2}Q${x + 4} ${y - 5} ${x + 4} ${y - 3}V${y + 4}H${x + 2}V${y + 3}H${x - 2}V${y + 4}ZM${x - 3} ${y - 3}V${y + 1}H${x + 3}V${y - 3}Z" fill="#0a7f12"/>
  <circle cx=${ax} cy=${ay} r="6" fill="#f01424"/><path d="M${ax} ${ay - 4}V${ay + 1}M${ax} ${ay + 2}V${ay + 4}" stroke="#fff" stroke-width="2"/>
  <text class="mk" text-anchor="middle" x=${lx} y=${ly}>${id}</text></g>`;

const mapDrawing = html`<svg class="mapsvg" viewBox="1212 230 661 861" preserveAspectRatio="xMinYMin slice" role="img" aria-label="Карта">
  <defs>
    <pattern id="orchard" width="9" height="9" patternUnits="userSpaceOnUse" patternTransform="scale(2.600 2.400)"><rect width="9" height="9" fill="#c9e1bf"/><circle cx="2" cy="2" r="0.800" fill="#e4f2de"/><circle cx="6.500" cy="6.500" r="0.800" fill="#e4f2de"/></pattern>
    <pattern id="lots" width="26" height="16" patternUnits="userSpaceOnUse" patternTransform="rotate(-28)"><rect width="26" height="16" fill="#c9e1bf"/><path d="M2 4H18M10 12H24" stroke="#a98b45" stroke-width="2"/></pattern>
    <pattern id="marsh" width="52" height="44" patternUnits="userSpaceOnUse"><rect width="52" height="44" fill="#f2efe9"/><path d="M2 6H24M32 16H50M8 27H28M34 38H52" stroke="#4aa2f5" stroke-width="3.500"/></pattern>
    <pattern id="mil" width="16" height="16" patternUnits="userSpaceOnUse" patternTransform="rotate(45)"><rect width="16" height="16" fill="#f3e0da"/><path d="M0 0V16" stroke="#f0c2bc" stroke-width="4"/></pattern>
  </defs>
  <rect x="1212" y="230" width="661" height="861" fill="#f2efe9"/>
  ${group(north, "translate(1200 100) scale(.4337 .3333)")}
  ${group(southwest, "translate(1200 500) scale(.3333 .3827)")}
  ${group(southeast, "translate(1540 420) scale(.3333 .4464)")}
  <path d="M1665 778L1680 790L1695 812L1718 815L1715 820L1692 818L1670 795ZM1735 820L1755 828L1790 838L1800 842L1760 840L1752 850L1748 838ZM1634 980L1637 1005L1680 992L1630 1018L1628 1010ZM1645 1043L1690 1070L1685 1073L1645 1050ZM1212 280L1220 310L1235 300Z" fill="#aad3df"/>
  <g fill="none" stroke-linecap="round" stroke-linejoin="round">
    ${lines(water, "#aad3df", 4)}${lines(water.slice(1, 2), "#7fa6dd", 1, "1 5")}
    ${lines(tracks, "#c49a5c", 1, "5 4")}${lines([borders], "#c3a5c3", 2, "9 3 2 3")}
    ${lines(fine, "#c8c6c4", 3)}${lines(fine, "#fff", 2)}
    ${lines(white, "#bdbbb9", 5)}${lines(white, "#fff", 4)}
    ${lines(sidings, "#999", 1)}${lines(sidings, "#8b8b8b", 2, "8 3")}
    ${lines(yellow, "#c3c58e", 7)}${lines(yellow, "#f7fabf", 5)}
    ${lines(orange, "#c59a5e", 7)}${lines(orange, "#fcd6a4", 5)}
    ${lines([trunk], "#dc8a70", 9)}${lines([trunk], "#f9b29c", 7)}
    ${lines(rail, "#707070", 4)}
  </g>
  <g fill="none">${lines(rail, "#e8e8e8", 2, "6 7")}<path d="M1400 253L1873 468" stroke="#666" stroke-width="1"/><path d="M1683 591L1782 487" stroke="#666" stroke-width="7" opacity="0.500"/></g>
  <g fill="#6b72b5"><rect x="1557" y="333" width="5" height="5"/><rect x="1846" y="451" width="7" height="7"/><rect x="1746" y="515" width="7" height="6"/><rect x="1570" y="1063" width="5" height="5"/></g>
  <g fill="#f3d2cb" stroke="#d8978a"><rect x="1298" y="528" width="31" height="19" rx="2"/><rect x="1805" y="978" width="32" height="20" rx="2"/></g>
  ${label("М-5", 1313, 543, 0, "shield")}${label("М-5", 1821, 993, 0, "shield")}
  ${label("Мервино", 1526, 493, 0, "town")}${label("Дашки Военные", 1571, 748, 0, "town")}${label("Сысоево", 1709, 1054, 0, "town")}${label("Божатково", 1452, 1033, 0, "town")}
  <text class="town" x="1211" y="309">илево</text><text class="small" x="1212" y="1061">отово</text>
  ${label("Московское шоссе", 1438, 298, 32, "road")}${label("Московское шоссе", 1686, 436, 30, "road")}${label("Михайловское шоссе", 1644, 585, -32, "road")}${label("Ситниковская улица", 1434, 658, -42, "road")}
  ${label("отое кольцо»", 1236, 856, -48, "road")}
  ${label("«Урал»", 1345, 250, 60, "road")}${label("«Урал»", 1319, 397, -72, "road")}${label("«Урал»", 1305, 509, 86, "road")}${label("«Урал»", 1320, 654, 78, "road")}${label("«Урал»", 1347, 777, 72, "road")}${label("«Урал»", 1444, 868, 24, "road")}${label("«Урал»", 1575, 929, 18, "road")}${label("«Урал»", 1752, 977, 14, "road")}${label("«Урал»", 1869, 1005, 14, "road")}
  ${label("Борковское ш", 1860, 268, 74, "road")}
  ${label("Плетёнка", 1510, 558, -32, "river")}${label("Звека", 1646, 492, -80, "river")}
  ${label("СТ \"Весна\"", 1318, 820, 0, "lots")}<text class="lots" x="1846" y="1047">СТ Не</text>
  <path d="M1225 1047V1072M1225 1060H1334V1047M1292 1060V1072" fill="none" stroke="#000" stroke-width="2"/>
  <text class="scale" x="1262" y="1057">1000 m</text><text class="scale" x="1243" y="1071">2000 ft</text>
  ${marker("1220", 1800, 495, 1800, 472, 1808, 488, "M1806 501L1811 493L1816 501Z")}
  ${marker("1221", 1547, 633, 1547, 612, 1555, 626, "M1536 641L1541 633L1545 641Z")}
  ${marker("1201", 1458, 1027, 1458, 1003, 1465, 1019, "M1453 1034H1462L1457 1040Z")}
</svg>`;

const roundIcons = {
  plus: svg`<path d="M12 3V21M3 12H21" stroke="#666" stroke-width="2"/>`,
  minus: svg`<path d="M4 12H20" stroke="#666" stroke-width="2.200"/>`,
  search: svg`<circle cx="10.500" cy="10" r="6.500" fill="none" stroke="#666" stroke-width="2.200"/><path d="M15 15L21 21" stroke="#666" stroke-width="2.600"/>`,
  info: svg`<path d="M5 19L12 6" stroke="#666" stroke-width="3.800"/><path d="M7 6.500L15.500 -1V10Z" fill="#666"/><path d="M14.500 14.500Q15 12 17.500 12.500Q20 13.500 18.500 16Q17 17.500 17 19M17 20.500V22" fill="none" stroke="#777" stroke-width="1.600"/>`,
  grid: svg`<path d="M4 3H20V21H4ZM12 3V6M12 21V18M4 12H7M20 12H17M12 10V14M10 12H14" fill="none" stroke="#777" stroke-width="1.600"/>${[3, 12, 21].map((y) => [3.500, 12, 20.500].map((x) => x === 12 && y === 12 ? nothing : svg`<circle cx=${x} cy=${y} r="2" fill="#fff" stroke="#777" stroke-width="1.400"/>`))}`,
  share: svg`<path d="M8 8.500H4Q2 8.500 2 10.500V20Q2 22 4 22H20Q22 22 22 20V10.500Q22 8.500 20 8.500H16M12 15V0.500M8 4L12 0.500L16 4" fill="none" stroke="#6d6d6d" stroke-width="2"/>`,
};

@customElement("app-root")
export class AppRoot extends LitElement {
  static styles = css`
    :host { display: block; background: #fff; font-family: "Liberation Sans", Arial, sans-serif; font-size: 16px; color: #000; }
    * { box-sizing: border-box; }
    button { font: inherit; color: inherit; background: none; border: 0; padding: 0; margin: 0; cursor: pointer; }
    a { color: #4667c2; text-decoration: none; white-space: nowrap; }
    svg { display: block; }

    .lid { margin: 0 160px; border-radius: 48px 48px 0 0; background: linear-gradient(#9a9d9a, #8a8c8a 10%, #77797a); padding: 5px 5px 0; }
    .rim { border-radius: 44px 44px 0 0; background: #2b2e31; padding: 5px 5px 0; }
    .bezel { border-radius: 38px 38px 0 0; background: #000; padding: 20px 17px 18px; }
    .screen { border-radius: 18px 18px 0 0; overflow: hidden; background: #fff; border-bottom: 4px solid #303035; }
    .chin { height: 40px; background: linear-gradient(#2c2c2c, #000); }
    .base { position: relative; height: 69px; border-radius: 0 0 36px 36px; overflow: hidden;
      background: linear-gradient(90deg, #a3a3a7 0, #ebebeb 44px, #cfcfcf 54px, #7c7c7c 68px, #a5a5a5 150px, #d3d4d4 270px, #d2d2d4 calc(100% - 270px), #a5a5a5 calc(100% - 150px), #7c7c7c calc(100% - 68px), #cfcfcf calc(100% - 54px), #ebebeb calc(100% - 44px), #a3a3a7 100%); }
    .shade { height: 69px; background: linear-gradient(rgba(150,150,150,0) 0, rgba(150,150,150,0.100) 35%, rgba(148,148,148,0.800) 68%, rgba(160,160,160,0.800) 76%, #c5c6c7 90%, #b5b5b6 100%); }
    .notch { position: absolute; top: 0; left: 50%; width: 320px; margin-left: -160px; height: 24px; border-radius: 0 0 24px 24px;
      background: linear-gradient(75deg, #444 6px, rgba(238,238,238,0) 20px), linear-gradient(-75deg, #444 6px, rgba(238,238,238,0) 20px), #eee; }
    .feet { display: flex; justify-content: space-between; padding: 0 104px; }
    .foot { width: 117px; height: 12px; clip-path: polygon(0 0, 100% 0, 92% 100%, 8% 100%);
      background: linear-gradient(rgba(0,0,0,0) 5px, #222 5px, #222 6px, rgba(40,40,40,0.850) 6px), linear-gradient(90deg, #777, #ccc 50%, #777); }

    .top { height: 72px; background: #3b5fb7; display: flex; justify-content: space-between; align-items: flex-start; padding: 11px 0 0 19px; overflow: hidden; border-bottom: 1px solid #5c7bc6; }
    .logo { display: flex; align-items: flex-start; gap: 4px; color: #fff; font: 700 33px/48px Roboto, sans-serif; }
    .ai { width: 59px; height: 46px; background: #fff; color: #3b5fb7; border-radius: 10px; text-align: center; }
    .user { color: #fff; font: 20px/42px "Liberation Serif", serif; width: 18px; overflow: hidden; white-space: nowrap; }

    .body { display: grid; grid-template-columns: 362px minmax(0, 1fr); }
    .side { background: #eff4ff; font-family: "Liberation Serif", serif; }
    .side h2 { display: flex; justify-content: space-between; margin: 0; padding: 13px 25px 14px 15px; font: 21px/26px "Liberation Serif", serif; height: 54px; }
    .fold { width: 6px; height: 12px; margin-top: 15px; background: #fff; clip-path: polygon(0 50%, 100% 0, 100% 100%); }
    .item { display: flex; width: 100%; height: 52px; align-items: center; padding: 0 31px 0 26px; gap: 8px; font-size: 16px; text-align: left; }
    .item span { flex: 1; padding-top: 2px; }
    .item .ico { width: 24px; height: 24px; }
    .chev { width: 12px; height: 8px; margin-top: 4px; }
    .bold { font-weight: 700; }
    .item.open { height: 46px; }
    .sub { margin: 0; padding: 0; height: 77px; background: #fff; list-style: none; font: 15px/38px "Liberation Sans", sans-serif; }
    .sub a { color: #555; display: flex; align-items: center; gap: 14px; padding-left: 37px; }
    .sub a::before { content: ""; width: 5px; height: 5px; border-radius: 50%; background: #4c9be0; }
    .admin { margin-top: 4px; }

    .tabs { height: 50px; background: #eff4ff; display: flex; }
    .tab { display: flex; align-items: center; gap: 14px; position: relative; color: #999; font-size: 18px; padding: 5px 0 0 9px; width: 247px; white-space: nowrap; }
    .tab .ico { width: 24px; height: 24px; color: #000; }
    .tab.on { background: #fff; color: #666; font-weight: 700; width: 209px; padding-left: 6px; gap: 17px; }
    .x { position: absolute; top: 6px; right: 7px; width: 10px; height: 10px; color: #ccc; }
    .on .x { color: #aaa; right: 6px; }
    .head { display: flex; justify-content: space-between; height: 36px; align-items: center; padding-left: 20px; overflow: hidden; }
    .head h1 { font-size: 16px; margin: 0; white-space: nowrap; }
    .links { display: flex; align-items: center; width: 551px; overflow: hidden; }
    .mini { width: 18px; height: 19px; flex: none; }
    .mini svg { width: 18px; height: 18px; }
    .links input { width: 16px; height: 16px; margin: 0 3px; accent-color: #0a7bff; }
    .tools { display: flex; align-items: center; gap: 2px; padding: 0 4px 0 15px; }
    .sep { width: 1px; height: 15px; background: #d3d3e3; }
    .links .sep + a { margin: 0 25px 0 14px; }

    .work { display: grid; grid-template-columns: 663px minmax(0, 1fr); }
    .panel { border: 1px solid #b9c8dc; border-width: 0 2px 0 1px; }
    h2.cap { margin: 0; font-size: 15px; line-height: 20px; padding: 7px 17px; height: 35px; }
    .ptabs { display: flex; padding-left: 2px; }
    .ptabs button { font-weight: 700; font-size: 15px; line-height: 20px; padding: 0 23px; border-bottom: 4px solid transparent; white-space: nowrap; }
    .ptabs .sel { color: #4667c2; border-color: #3b5fb7; }
    .ptabs button + button { padding-left: 25px; }
    .p1 { height: 53px; } .p1 button { padding-top: 5px; }
    .p2 { height: 43px; } .p2 button { padding-bottom: 2px; }
    .pm { height: 42px; } .pm button { padding-bottom: 2px; }
    .collapse { height: 41px; display: flex; justify-content: flex-end; align-items: flex-end; padding: 0 5px 6px; }
    .bar { height: 35px; display: flex; align-items: center; gap: 24px; padding-left: 29px; white-space: nowrap; }
    .more { width: 36px; height: 35px; background: #3b5fb7; color: #fff; font-size: 18px; font-weight: 700; line-height: 32px; margin-left: auto; flex: none; }
    .narrow { width: 21px; overflow: hidden; padding-left: 10px; text-align: left; }

    .grid { position: relative; border-top: 2px solid #e0e8fb; }
    table { width: 100%; table-layout: fixed; border-collapse: separate; border-spacing: 0; font-size: 15px; color: #555; }
    th { font-weight: 400; text-align: left; padding: 0 0 0 12px; white-space: nowrap; border-bottom: 2px solid #e0e8fb; }
    td { height: 43px; padding: 0 0 0 5px; border-bottom: 1px solid #d5e0fb; white-space: nowrap; }
    td:last-child { border: 0; padding: 0; }
    .t1 th { height: 37px; padding-left: 8px; } .t1 th:first-child { padding-left: 7px; } .t1 th:nth-child(5) { padding-left: 10px; }
    .gap td { height: 11px; }
    .picked td { background: #d7e1ff; font-weight: 700; color: #444; }
    .t1 .picked td:last-child { background: #fff; }
    .t2 th { height: 37px; }
    .t2 .g { line-height: 24px; padding-left: 9px; }
    .t2 tr + tr th { padding-left: 10px; }
    .t2 .grp { text-align: center; padding: 0 0 0 10px; }
    .t2 .ns { padding-left: 7px; }
    .t2 td { background: #f08171; color: #703a36; border-bottom: 2px solid #e2b2b6; }
    .t2 td:last-child { background: #fff; border: 0; }
    .t2 .picked td { background: #dcc3d3; color: #4a2a30; }
    .t2 .picked td:last-child { background: #fff; }
    .t2 .cut td { height: 7px; border: 0; }
    .wifi { width: 18px; height: 16px; margin-left: 4px; }
    .vs { position: absolute; right: 0; width: 12px; background: #d6d6d6; border-radius: 6px; }
    .vs1 { top: 68px; height: 40px; } .vs2 { top: 75px; height: 182px; }
    .hs { height: 10px; background: #d6d6d6; border-radius: 6px; width: 47%; }
    .hs1 { margin-top: 9px; } .hs2 { width: 44%; }
    .pager { height: 36px; display: flex; align-items: center; padding-left: 18px; border-bottom: 1px solid #b9c8dc; white-space: nowrap; }
    .pb { width: 34px; height: 20px; display: grid; place-items: center; flex: none; }
    .pb svg { width: 16px; height: 16px; }
    .pager .sep { margin: 0 4px 0 6px; }
    .pager .sep ~ .sep { margin: 0 3px 0 5px; }
    .pager input { width: 40px; height: 24px; margin: 0 4px 0 3px; border: 1px solid #767676; border-radius: 2px; font: inherit; padding: 0 3px; }
    .pager nav { display: flex; gap: 24px; padding-left: 34px; }
    .status { min-width: 0; padding-left: 3px; }

    .right { min-width: 0; display: flex; flex-direction: column; }
    .map { position: relative; flex: 1; overflow: hidden; }
    .mapsvg { position: absolute; width: 100%; height: 100%; font-family: "Noto Sans", sans-serif; }
    .rb { position: absolute; width: 46px; height: 46px; border-radius: 50%; background: #fff; box-shadow: 0 2px 4px rgba(0,0,0,0.450); display: grid; place-items: center; }
    .rb svg { width: 22px; height: 22px; overflow: visible; }
    .b1 { left: 33px; top: 31px; } .b2 { left: 33px; top: 84px; } .b3 { left: 113px; top: 29px; } .b4 { left: 113px; top: 84px; } .b5 { left: 32px; top: 174px; } .b6 { left: 32px; top: 235px; }
    .town { font-size: 15px; fill: #333; stroke: #fff; stroke-width: 2px; paint-order: stroke; stroke-opacity: 0.700; }
    .small { font-size: 13px; fill: #555; }
    .road { font-size: 11px; fill: #3d2a18; }
    .river { font-size: 12px; fill: #5485c5; font-style: italic; }
    .lots { font-size: 13px; fill: #6d8a68; font-style: italic; }
    .shield { font-size: 13px; fill: #6b3a32; }
    .scale { font: 12px "Liberation Serif", serif; }
    .mk { font: 700 13px "DejaVu Sans", sans-serif; fill: #f01018; stroke: #fff; stroke-width: 3px; paint-order: stroke; }
    .notice { background: #3f5870; border-top: 2px solid #b3c1d2; border-bottom: 1px solid #b3c1d2; height: 28px; padding-left: 18px; font-weight: 700; font-size: 15px; line-height: 25px; }
  `;

  private pager(tail: unknown) {
    const arrow = (d: string) => html`<svg viewBox="0 0 16 16" aria-hidden="true"><path d=${d} fill="#999"/></svg>`;
    return html`<div class="pager">
      <button class="pb" aria-label="Первая">${arrow("M2 1H5V15H2ZM13.500 2V14L6.500 8Z")}</button>
      <button class="pb" aria-label="Назад">${arrow("M11.500 2V14L4.500 8Z")}</button>
      <span class="sep"></span><label>Страница<input .value=${"1"} /></label>из 1<span class="sep"></span>
      <button class="pb" aria-label="Вперёд">${arrow("M4.500 2V14L11.500 8Z")}</button>
      <button class="pb" aria-label="Последняя">${arrow("M2.500 2V14L9.500 8ZM11 1H14V15H11Z")}</button>
      <span class="sep"></span>
      <button class="pb" aria-label="Обновить"><svg viewBox="0 0 16 16" aria-hidden="true"><path d="M2 7A6 6 0 0 1 12.500 4M14 9A6 6 0 0 1 3.500 12" fill="none" stroke="#999" stroke-width="2.400"/><path d="M15 0.500V6.500H9ZM1 15.500V9.500H7Z" fill="#999"/></svg></button>
      ${tail}
    </div>`;
  }

  private close() {
    return html`<button class="x" aria-label="Закрыть"><svg viewBox="0 0 10 10" aria-hidden="true"><path d="M1.500 1.500L8.500 8.500M8.500 1.500L1.500 8.500" stroke="currentColor" stroke-width="3"/></svg></button>`;
  }

  private cols(widths: number[]) {
    return html`<colgroup>${widths.map((w) => html`<col style="width:${w}px" />`)}<col /><col style="width:12px" /></colgroup>`;
  }

  render() {
    const links = (names: string[]) => names.map((n) => html`<a href="#">${n}</a>`);
    return html`
    <div class="lid"><div class="rim"><div class="bezel"><div class="screen">
      <header class="top"><div class="logo"><span class="ai">АИ</span><span>ТРАНСПОРТ</span></div><span class="user">Се</span></header>
      <div class="body">
        <nav class="side">
          <h2>Меню<span class="fold"></span></h2>
          ${menu.map(([name, ic, more]) => html`<button class="item">${icon(ic)}<span>${name}</span>${more ? chevron(false) : nothing}</button>`)}
          <button class="item bold open">${icon(reportIcon)}<span>Отчёты</span>${chevron(true)}</button>
          <ul class="sub"><li><a href="#">Пользовательские отчёты</a></li><li><a class="bold" href="#">Системные отчёты</a></li></ul>
          <button class="item admin">${icon(gearIcon)}<span>Администрирование</span>${chevron(false)}</button>
        </nav>
        <main>
          <div class="tabs">
            <div class="tab">${icon(openIcon)}<span>РЕЕСТР ВЫПУСКА</span>${this.close()}</div>
            <div class="tab on">${icon(monitorIcon)}<span>МОНИТОРИНГ</span>${this.close()}</div>
          </div>
          <div class="head"><h1>Мониторинг: Пост №1</h1>
            <div class="links"><a href="#">Отслеживать ТС</a>
              <div class="tools"><button class="mini" aria-label="Обновить">${tile(swap)}</button><button class="mini" aria-label="Добавить">${tile(plus)}</button><input type="checkbox" checked aria-label="Отслеживать" /><button class="mini" aria-label="Убрать">${tile(minus)}</button></div>
              <span class="sep"></span><a href="#">Оперативное управление</a><a href="#">Контроль ТС</a></div>
          </div>
          <div class="work">
            <section>
              <h2 class="cap">Объекты мониторинга</h2>
              <div class="ptabs p1"><button class="sel">Маршруты</button><button>Маршруты сводная</button></div>
              <div class="panel">
                <div class="collapse"><button class="mini" aria-label="Свернуть">${tile(minus)}</button></div>
                <div class="bar">${links(["Фильтр", "ТС", "Остановки", "Трасса", "Параметры УТР", "Маршрут"])}<button class="more">»</button></div>
                <div class="grid"><table class="t1">${this.cols([33, 94, 117, 117, 179])}
                  <thead><tr><th>НШ</th><th>ID в.м.</th><th>Номер марш…</th><th>Вид</th><th>Конечный пункт А</th><th colspan="2">Тип трассы</th></tr></thead>
                  <tbody><tr class="gap"><td colspan="6"></td><td></td></tr>
                  ${routes.map((r, i) => html`<tr class=${i === 1 ? "picked" : ""}><td></td>${r.map((c) => html`<td>${c}</td>`)}<td></td></tr>`)}</tbody>
                </table><span class="vs vs1"></span></div>
                <div class="hs hs1"></div>
                ${this.pager(html`<nav>${links(["25", "50", "100", "200", "300"])}</nav><button class="more">»</button>`)}
              </div>
              <div class="ptabs p2"><button class="sel">Транспортные средства</button><button>Остановки</button></div>
              <div class="panel">
                <div class="collapse"><button class="mini" aria-label="Свернуть">${tile(minus)}</button></div>
                <div class="bar">${links(["Фильтр", "Трек за период", "Пробег ТС за период", "Трек слежения"])}<button class="more">»</button></div>
                <div class="grid"><table class="t2">${this.cols([34, 32, 70, 54, 53, 63, 82, 119, 94])}
                  <thead><tr><th rowspan="2"></th><th rowspan="2" class="ns">НШ</th><th rowspan="2" class="g">Гараж.<br />номер…</th><th colspan="2" class="grp">Маршрут</th><th rowspan="2">Наряд</th><th rowspan="2">Вид ТС</th><th rowspan="2">Госномер</th><th rowspan="2">Класс вм…</th><th rowspan="2" colspan="2">PDOP</th></tr>
                  <tr><th>План</th><th>Факт</th></tr></thead>
                  <tbody>${vehicles.map((r, i) => html`<tr class=${i === 0 ? "picked" : ""}><td>${wifi}</td><td></td>${r.map((c) => html`<td>${c}</td>`)}<td></td></tr>`)}
                  <tr class="cut"><td colspan="10"></td><td></td></tr></tbody>
                </table><span class="vs vs2"></span></div>
                <div class="hs hs2"></div>
                ${this.pager(html`<span class="status">Отображаются записи с 1 по 9 из 9</span><button class="more narrow">»</button>`)}
              </div>
            </section>
            <section class="right">
              <div class="ptabs pm"><button class="sel">Карта</button></div>
              <div class="map">${mapDrawing}
                <button class="rb b1" aria-label="Приблизить">${icon(roundIcons.plus, "")}</button>
                <button class="rb b2" aria-label="Отдалить">${icon(roundIcons.minus, "")}</button>
                <button class="rb b3" aria-label="Поиск">${icon(roundIcons.search, "")}</button>
                <button class="rb b4" aria-label="Справка">${icon(roundIcons.info, "")}</button>
                <button class="rb b5" aria-label="Область">${icon(roundIcons.grid, "")}</button>
                <button class="rb b6" aria-label="Поделиться">${icon(roundIcons.share, "")}</button>
              </div>
            </section>
          </div>
          <footer class="notice">Уведомления по ТС Фильтр: 5 февр. 2025 г.;</footer>
        </main>
      </div>
    </div></div>
    <div class="chin"></div></div></div>
    <div class="base"><div class="shade"></div><div class="notch"></div></div>
    <div class="feet"><div class="foot"></div><div class="foot"></div></div>`;
  }
}
